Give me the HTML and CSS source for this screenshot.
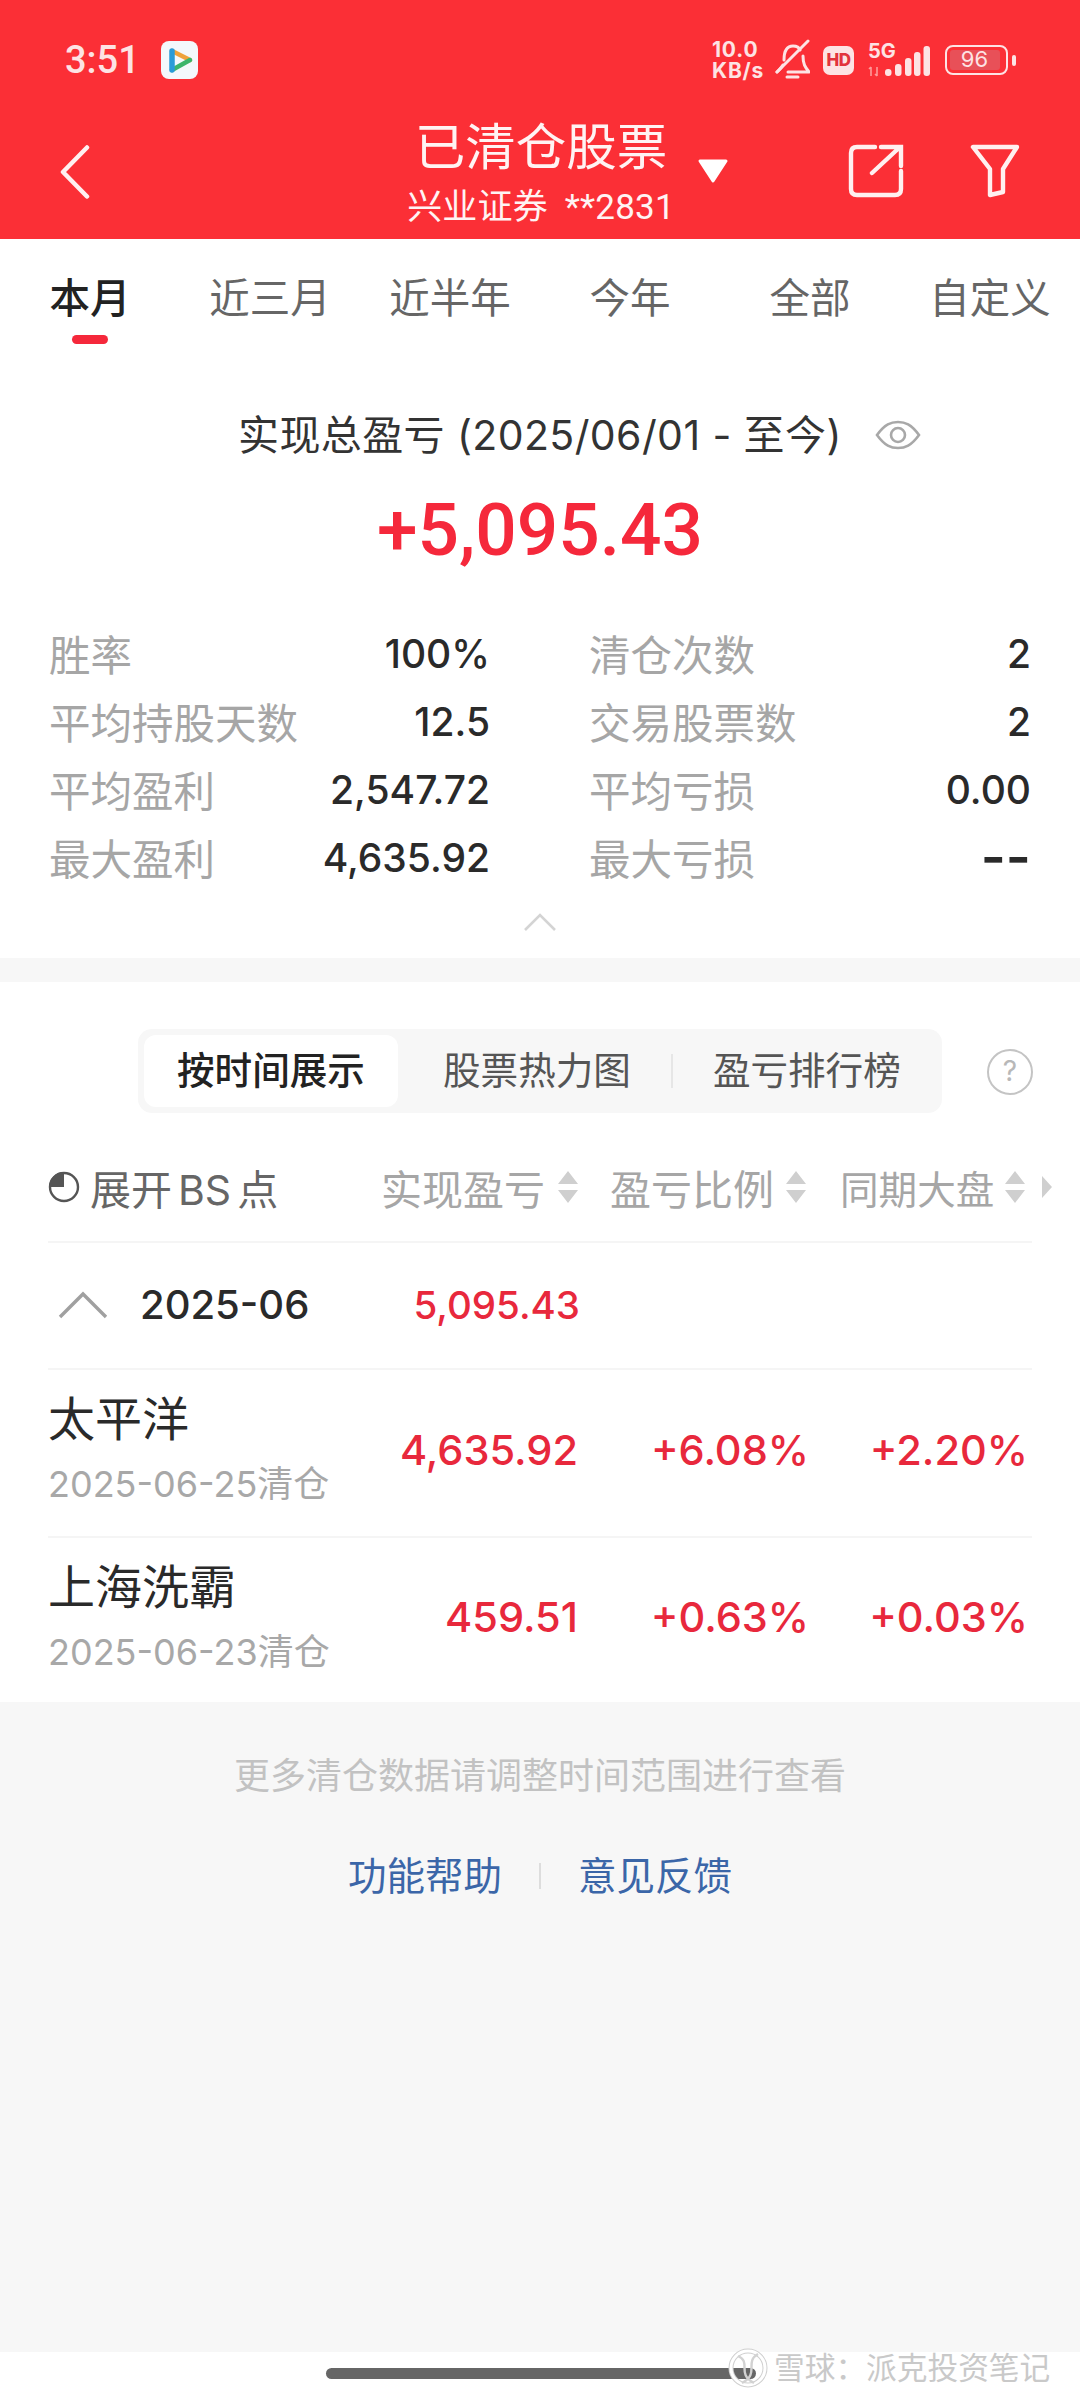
FILE: index.html
```html
<!DOCTYPE html>
<html lang="zh">
<head>
<meta charset="utf-8">
<title>已清仓股票</title>
<link rel="stylesheet" href="styles.css">
</head>
<body>
<div class="page">
  <header class="hero">
    <div class="status">
      <span class="clock">3:51</span>
      <span class="appicon">
        <svg viewBox="0 0 37 38" width="37" height="38"><path d="M11 10 L29 19" stroke="#EFA23B" stroke-width="4.5" stroke-linecap="round" fill="none"/><path d="M29 19 L11 29" stroke="#3CB56B" stroke-width="4.5" stroke-linecap="round" fill="none"/><path d="M11 10 V29" stroke="#2A9BD8" stroke-width="5.5" stroke-linecap="round" fill="none"/></svg>
      </span>
      <span class="status-right">
        <span class="speed"><span>10.0</span><span>KB/s</span></span>
        <svg class="bell" viewBox="0 0 36 42" width="36" height="42"><path d="M10 21 C10 11 14 7 19 7 C22 7 25 8 26 11 M29 17 C29 25 31 28 35 33 H14 M3 33 C6 30 8 28 9 26 M13 38 H24" stroke="#FDE3E4" stroke-width="3" fill="none" stroke-linecap="round" stroke-linejoin="round"/><path d="M3 33 L34 2" stroke="#FDE3E4" stroke-width="3" stroke-linecap="round"/></svg>
        <span class="hd">HD</span>
        <span class="net">
          <span class="fiveg">5G</span>
          <svg viewBox="0 0 62 34" width="62" height="34" class="bars"><g fill="none" stroke="#F99" stroke-width="1.6"><path d="M3 33 V24 M1 26 L3 24 M9 24 V33 M7 31 L9 33"/></g><g fill="#FDE3E4"><rect x="17" y="26" width="6.5" height="7" rx="3"/><rect x="27" y="21" width="6.5" height="12" rx="3"/><rect x="37" y="15" width="6.5" height="18" rx="3"/><rect x="46" y="9" width="6.5" height="24" rx="3"/><rect x="55.5" y="3" width="6.5" height="30" rx="3"/></g></svg>
        </span>
        <span class="battery"><span class="battery-fill"></span><span class="battery-num">96</span></span>
        <span class="nub"></span>
      </span>
    </div>
    <div class="navbar">
      <svg class="back" viewBox="0 0 30 54" width="30" height="54"><path d="M27 2.5 L3 27 L27 51.5" stroke="#FFF0F0" stroke-width="4.5" fill="none" stroke-linecap="round" stroke-linejoin="round"/></svg>
      <div class="titles">
        <div class="title">已清仓股票</div>
        <div class="subtitle">兴业证券 **2831</div>
      </div>
      <svg class="caret" viewBox="0 0 32 26" width="32" height="26"><path d="M3 3 H29 L16 23 Z" fill="#fff" stroke="#fff" stroke-width="3" stroke-linejoin="round"/></svg>
      <svg class="share" viewBox="0 0 56 54" width="56" height="54"><path d="M27 3 H9 Q3 3 3 9 V45 Q3 51 9 51 H47 Q53 51 53 45 V27" stroke="#FFF0F0" stroke-width="4.4" fill="none" stroke-linecap="round"/><path d="M24 29 L52 3 M33 3 H53 V22" stroke="#FFF0F0" stroke-width="4.4" fill="none" stroke-linecap="round"/></svg>
      <svg class="filter" viewBox="0 0 50 54" width="50" height="54"><path d="M3 3 H47 L33 25 V48 L20 51 V25 Z" stroke="#FFF0F0" stroke-width="4.4" fill="none" stroke-linejoin="round"/></svg>
    </div>
  </header>

  <nav class="tabs">
    <span class="tab tab-active">本月</span>
    <span class="tab">近三月</span>
    <span class="tab">近半年</span>
    <span class="tab">今年</span>
    <span class="tab">全部</span>
    <span class="tab">自定义</span>
  </nav>

  <section class="summary">
    <div class="sum-head">
      <span class="sum-label">实现总盈亏 (2025/06/01 - 至今)</span>
      <svg class="eye" viewBox="0 0 46 30" width="46" height="30"><path d="M2 15 C10 4 16 2 23 2 C30 2 36 4 44 15 C36 26 30 28 23 28 C16 28 10 26 2 15 Z" stroke="#A8A8A8" stroke-width="2.6" fill="none"/><circle cx="23" cy="15" r="7" stroke="#A8A8A8" stroke-width="2.6" fill="none"/></svg>
    </div>
    <div class="amount">+5,095.43</div>
    <div class="stats">
      <div class="stat"><span class="stat-k">胜率</span><span class="stat-v">100%</span></div>
      <div class="stat"><span class="stat-k">清仓次数</span><span class="stat-v">2</span></div>
      <div class="stat"><span class="stat-k">平均持股天数</span><span class="stat-v">12.5</span></div>
      <div class="stat"><span class="stat-k">交易股票数</span><span class="stat-v">2</span></div>
      <div class="stat"><span class="stat-k">平均盈利</span><span class="stat-v">2,547.72</span></div>
      <div class="stat"><span class="stat-k">平均亏损</span><span class="stat-v">0.00</span></div>
      <div class="stat"><span class="stat-k">最大盈利</span><span class="stat-v">4,635.92</span></div>
      <div class="stat"><span class="stat-k">最大亏损</span><span class="stat-v stat-dash">--</span></div>
    </div>
    <svg class="collapse" viewBox="0 0 34 20" width="34" height="20"><path d="M2 18 L17 3 L32 18" stroke="#D4D4D4" stroke-width="2.6" fill="none"/></svg>
  </section>

  <section class="records">
    <div class="seg-row">
      <div class="seg">
        <span class="seg-item seg-active">按时间展示</span>
        <span class="seg-item seg-mid">股票热力图</span>
        <span class="seg-div"></span>
        <span class="seg-item seg-last">盈亏排行榜</span>
      </div>
      <span class="help">?</span>
    </div>
    <div class="thead">
      <svg class="pie" viewBox="0 0 32 32" width="32" height="32"><circle cx="16" cy="16" r="14" stroke="#555" stroke-width="2.4" fill="none"/><path d="M16 16 V1 A15 15 0 0 0 1 16 Z" fill="#555"/></svg>
      <span class="bs">展开<span class="bs-latin">BS</span>点</span>
      <span class="th th1">实现盈亏</span>
      <svg class="sort" viewBox="0 0 20 34" width="20" height="34"><path d="M10 1 L20 14 H0 Z M10 33 L0 20 H20 Z" fill="#CFCFCF"/></svg>
      <span class="th th2">盈亏比例</span>
      <svg class="sort" viewBox="0 0 20 34" width="20" height="34"><path d="M10 1 L20 14 H0 Z M10 33 L0 20 H20 Z" fill="#CFCFCF"/></svg>
      <span class="th th3">同期大盘</span>
      <svg class="sort" viewBox="0 0 20 34" width="20" height="34"><path d="M10 1 L20 14 H0 Z M10 33 L0 20 H20 Z" fill="#CFCFCF"/></svg>
      <svg class="more" viewBox="0 0 12 24" width="12" height="24"><path d="M1 1 L11 12 L1 23 Z" fill="#CFCFCF"/></svg>
    </div>
    <div class="month">
      <svg class="month-chev" viewBox="0 0 50 28" width="50" height="28"><path d="M2 26 L25 3 L48 26" stroke="#A0A0A0" stroke-width="3.4" fill="none"/></svg>
      <span class="month-date">2025-06</span>
      <span class="month-val">5,095.43</span>
    </div>
    <div class="row">
      <div class="row-name"><div class="name">太平洋</div><div class="date">2025-06-25清仓</div></div>
      <span class="num">4,635.92</span><span class="num">+6.08%</span><span class="num">+2.20%</span>
    </div>
    <div class="row row-last">
      <div class="row-name"><div class="name">上海洗霸</div><div class="date">2025-06-23清仓</div></div>
      <span class="num">459.51</span><span class="num">+0.63%</span><span class="num">+0.03%</span>
    </div>
  </section>

  <footer class="foot">
    <div class="hint">更多清仓数据请调整时间范围进行查看</div>
    <div class="links"><span class="link">功能帮助</span><span class="link-div"></span><span class="link">意见反馈</span></div>
  </footer>
  <div class="bottom"><span class="homebar"></span></div>
  <div class="mark">
    <svg viewBox="0 0 40 40" width="40" height="40"><circle cx="20" cy="20" r="17" stroke="#CFCFCF" stroke-width="5" fill="none"/><circle cx="20" cy="20" r="17" stroke="#fff" stroke-width="3" fill="none"/><path d="M10 8 C24 14 8 26 26 35 M30 6 C16 14 32 26 14 35" stroke="#D2D2D2" stroke-width="2.4" fill="none"/></svg>
    <span>雪球：派克投资笔记</span>
  </div>
</div>
</body>
</html>
```

FILE: styles.css
```css
* { box-sizing: border-box; }
html, body { margin: 0; padding: 0; }
body { font-family: Inter, "Noto Sans CJK SC", sans-serif; background: #fff; color: #222; }
.page { width: 1080px; height: 2400px; display: flex; flex-direction: column; position: relative; overflow: hidden; background: #fff; }

.hero { height: 239px; background: #FB2F36; flex: none; }
.status { height: 88px; padding: 32px 0 0 65px; display: flex; align-items: center; }
.clock { font-family: Roboto, sans-serif; font-size: 38px; font-weight: 500; color: #FDE3E4; line-height: 44px; }
.appicon { width: 37px; height: 38px; margin-left: 21px; background: #F4F8FC; border-radius: 8px; display: flex; flex: none; }
.status-right { margin-left: auto; margin-right: 64px; display: flex; align-items: center; color: #FDE3E4; }
.speed { display: flex; flex-direction: column; font-size: 21px; font-weight: 700; line-height: 21px; width: 51px; white-space: nowrap; letter-spacing: 0.8px; }
.bell { margin-left: 11px; flex: none; }
.hd { margin-left: 13px; width: 31px; height: 29px; background: #FDE3E4; color: #E2333C; border-radius: 7px; font-size: 17px; font-weight: 800; line-height: 29px; text-align: center; letter-spacing: -0.5px; }
.net { margin-left: 14px; width: 62px; height: 34px; position: relative; }
.fiveg { position: absolute; left: 0; top: -2px; font-size: 20px; font-weight: 700; line-height: 20px; }
.bars { position: absolute; left: 0; top: 0; }
.battery { margin-left: 15px; width: 63px; height: 30px; border: 2.5px solid #FDE3E4; border-radius: 8px; position: relative; display: block; overflow: hidden; }
.battery-fill { position: absolute; left: 3px; top: 3px; bottom: 3px; width: 50px; background: #E85058; border-radius: 3px; }
.battery-num { position: absolute; left: 0; right: 4px; top: 0; text-align: center; font-size: 22px; line-height: 25px; color: #FDE3E4; }
.nub { width: 4px; height: 11px; margin-left: 4px; border-radius: 2px; background: #FDE3E4; }

.navbar { height: 151px; display: flex; align-items: flex-start; }
.back { margin: 57px 0 0 60px; flex: none; }
.titles { margin-left: 306px; width: 290px; text-align: center; flex: none; }
.title { font-size: 50.5px; line-height: 62px; margin-top: 28px; color: #FFF3F3; }
.subtitle { font-family: Roboto, "Noto Sans CJK SC", sans-serif; font-size: 35px; line-height: 44px; margin-top: 8px; color: #FFF3F3; white-space: nowrap; word-spacing: 8px; letter-spacing: 0.2px; }
.caret { margin: 70px 0 0 11px; flex: none; }
.share { margin: 56px 0 0 119px; flex: none; }
.filter { margin: 56px 0 0 66px; flex: none; }

.tabs { height: 119px; flex: none; display: grid; grid-template-columns: repeat(6, 1fr); align-items: start; }
.tab { font-size: 40.5px; line-height: 52px; margin-top: 34px; color: #666; text-align: center; white-space: nowrap; }
.tab-active { color: #222; font-weight: 500; position: relative; }
.tab-active::after { content: ""; position: absolute; left: 72px; top: 62px; width: 36px; height: 9px; border-radius: 5px; background: #F5283B; }

.summary { height: 624px; flex: none; border-bottom: 24px solid #F7F7F7; display: flex; flex-direction: column; }
.sum-head { margin-top: 51px; height: 52px; display: flex; align-items: center; padding-left: 238px; flex: none; }
.sum-label { font-size: 41px; line-height: 52px; color: #333; white-space: nowrap; letter-spacing: 0.4px; }
.eye { margin-left: 33px; flex: none; }
.amount { margin-top: 23px; height: 92px; text-align: center; font-family: Roboto, sans-serif; font-size: 73px; line-height: 92px; font-weight: 500; color: #F5283B; flex: none; }
.stats { margin-top: 43px; padding: 0 48px 0 49px; display: grid; grid-template-columns: 441px 442px; column-gap: 99px; grid-auto-rows: 68px; flex: none; }
.stat { display: flex; justify-content: space-between; align-items: center; }
.stat-k { font-size: 41.5px; color: #A6A6A6; white-space: nowrap; }
.stat-v { font-size: 39px; font-weight: 500; color: #2A2A2A; white-space: nowrap; }
.stat-dash { font-size: 54px; line-height: 50px; font-weight: 600; }
.collapse { display: block; margin: 21px 0 0 523px; flex: none; }

.records { flex: none; height: 720px; padding: 0 48px; }
.seg-row { padding-top: 47px; height: 150px; display: flex; align-items: flex-start; }
.seg { margin-left: 90px; width: 804px; height: 84px; background: #F7F7F7; border-radius: 14px; display: flex; align-items: center; padding-left: 6px; flex: none; }
.seg-item { font-size: 37.6px; line-height: 72px; white-space: nowrap; color: #555; }
.seg-active { width: 254px; height: 72px; text-align: center; background: #fff; border-radius: 12px; color: #222; font-weight: 500; }
.seg-mid { margin-left: 45px; }
.seg-div { width: 2px; height: 34px; background: #E6E6E6; margin-left: 40px; }
.seg-last { margin-left: 40px; }
.help { margin: 20px 0 0 45px; width: 46px; height: 46px; border: 2.6px solid #C4C4C4; border-radius: 50%; color: #B8B8B8; text-align: center; font-size: 28px; line-height: 40px; flex: none; }
.thead { height: 111px; border-bottom: 2px solid #F5F5F5; display: flex; align-items: center; }
.pie { flex: none; }
.bs { margin-left: 10px; font-size: 41px; color: #666; white-space: nowrap; width: 291px; flex: none; }
.bs-latin { margin: 0 6px; }
.th { font-size: 41px; color: #A6A6A6; white-space: nowrap; flex: none; }
.th1 { width: 177px; }
.th2 { margin-left: 32px; width: 176px; }
.th3 { margin-left: 34px; width: 165px; font-size: 38.6px; }
.sort { flex: none; }
.more { flex: none; margin-left: 16px; }
.month { height: 127px; padding-bottom: 2px; border-bottom: 2px solid #F5F5F5; display: flex; align-items: center; }
.month-chev { margin-left: 10px; flex: none; }
.month-date { margin-left: 32px; font-size: 40px; font-weight: 500; color: #2A2A2A; width: 168px; white-space: nowrap; flex: none; }
.month-val { width: 272px; text-align: right; font-size: 38.5px; font-weight: 500; color: #E8283C; white-space: nowrap; flex: none; }
.row { height: 168px; border-bottom: 2px solid #F5F5F5; display: grid; grid-template-columns: 260px 270px 231px 219px; align-items: center; }
.row-last { border-bottom: 0; height: 164px; }
.row-name { align-self: start; padding-top: 19px; }
.name { font-size: 47px; line-height: 60px; color: #2A2A2A; white-space: nowrap; }
.date { font-size: 36px; line-height: 48px; color: #A8A8A8; margin-top: 11px; white-space: nowrap; }
.num { text-align: right; font-size: 41.5px; font-weight: 500; color: #E8283C; white-space: nowrap; margin-top: -6px; }

.foot { flex: 1; background: #F7F7F7; display: flex; flex-direction: column; align-items: center; }
.hint { margin-top: 49px; font-size: 36px; line-height: 50px; color: #C2C2C2; white-space: nowrap; }
.links { margin-top: 50px; display: flex; align-items: center; }
.link { font-size: 38.5px; line-height: 50px; color: #3B66A8; white-space: nowrap; }
.link-div { width: 2px; height: 26px; background: #DDD; margin: 0 37px; }
.bottom { height: 48px; flex: none; background: #fff; padding: 16px 0 0 326px; }
.homebar { display: block; width: 430px; height: 11px; border-radius: 6px; background: #666; }
.mark { position: absolute; left: 728px; top: 2346px; display: flex; align-items: center; gap: 6px; color: #C9C9C9; font-size: 30.7px; line-height: 44px; white-space: nowrap; text-shadow: 1px 1px 0 #fff; }
```
